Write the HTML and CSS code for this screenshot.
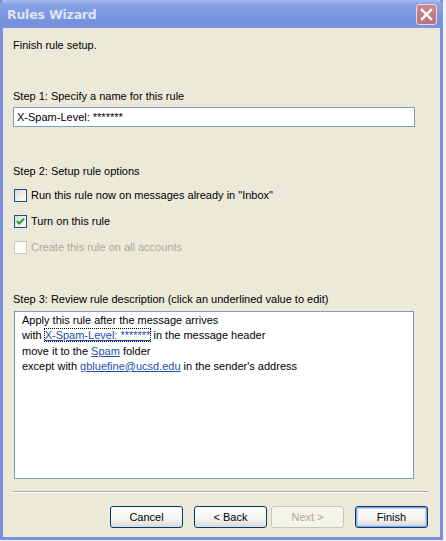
FILE: index.html
```html
<!DOCTYPE html>
<html>
<head>
<meta charset="utf-8">
<link rel="stylesheet" href="styles.css">
</head>
<body>
<div class="window">
  <div class="titlebar">
    <span class="title">Rules Wizard</span>
    <span class="close"><svg width="13" height="13" viewBox="0 0 13 13"><path d="M2 2 L11 11 M11 2 L2 11" stroke="#fff" stroke-width="2.4" stroke-linecap="square"/></svg></span>
  </div>
  <div class="content">
    <div class="intro">Finish rule setup.</div>
    <div class="label step1">Step 1: Specify a name for this rule</div>
    <div class="input">X-Spam-Level: *******</div>
    <div class="label step2">Step 2: Setup rule options</div>
    <div class="options">
      <div class="opt"><span class="cb"></span><span>Run this rule now on messages already in "Inbox"</span></div>
      <div class="opt"><span class="cb"><svg width="11" height="11" viewBox="0 0 11 11"><path d="M2 5 L4.3 7.5 L9 2.6" fill="none" stroke="#21a121" stroke-width="2"/></svg></span><span>Turn on this rule</span></div>
      <div class="opt disabled"><span class="cb"></span><span>Create this rule on all accounts</span></div>
    </div>
    <div class="label step3">Step 3: Review rule description (click an underlined value to edit)</div>
    <div class="desc">
      <div>Apply this rule after the message arrives</div>
      <div>with <a class="link focus">X-Spam-Level: *******</a> in the message header</div>
      <div>move it to the <a class="link">Spam</a> folder</div>
      <div>except with <a class="link">gbluefine@ucsd.edu</a> in the sender's address</div>
    </div>
    <div class="sep"></div>
    <div class="buttons">
      <span class="btn">Cancel</span>
      <span class="btn back">&lt; Back</span>
      <span class="btn off">Next &gt;</span>
      <span class="btn def">Finish</span>
    </div>
  </div>
</div>
</body>
</html>
```
FILE: styles.css
```css
html, body {
  margin: 0;
  padding: 0;
  background: #f4f4f4;
}
body {
  font-family: "Liberation Sans", "DejaVu Sans", sans-serif;
  font-size: 11px;
  color: #000;
}
.window {
  width: 437px;
  height: 537px;
  border-left: 3px solid #7b8edf;
  border-right: 3px solid #7b8edf;
  border-bottom: 3px solid #7b8edf;
  background: #ece9d8;
  display: flex;
  flex-direction: column;
}
.titlebar {
  height: 28px;
  margin: 0 -3px;
  padding: 0 6px 0 7px;
  background: linear-gradient(#a9bcee 0px, #8aa3e6 4px, #7d98e1 14px, #7590dc 24px, #7d93de 28px);
  display: flex;
  align-items: center;
  justify-content: space-between;
  border-radius: 6px 6px 0 0;
}
.title {
  color: #dde5f8;
  font-family: "DejaVu Sans", sans-serif;
  font-weight: bold;
  font-size: 12.5px;
  letter-spacing: -0.2px;
}
.close {
  width: 19px;
  height: 19px;
  border: 1px solid #e8d8dc;
  border-radius: 3px;
  background: linear-gradient(#cc8a90, #b9727a);
  display: flex;
  align-items: center;
  justify-content: center;
  margin-top: 1px;
}
.content {
  flex: 1;
  padding: 0 11px 0 10px;
  display: flex;
  flex-direction: column;
}
.intro {
  margin-top: 11px;
  line-height: 13px;
}
.label {
  line-height: 13px;
}
.step1 { margin-top: 38px; }
.input {
  margin-top: 4px;
  width: 397px;
  height: 18px;
  border: 1px solid #7f9db9;
  background: #fff;
  padding-left: 3px;
  line-height: 18px;
  box-sizing: content-box;
}
.step2 { margin-top: 38px; }
.options {
  margin-top: 10px;
  display: flex;
  flex-direction: column;
  gap: 12px;
}
.opt {
  display: flex;
  align-items: center;
  gap: 4px;
  height: 14px;
  padding-left: 1px;
}
.cb {
  width: 11px;
  height: 11px;
  border: 1px solid #1c5180;
  background: linear-gradient(135deg, #dcdcd6, #fff);
  display: flex;
  align-items: center;
  justify-content: center;
}
.disabled { color: #aca899; }
.disabled .cb {
  border-color: #cac8bb;
  background: #fff;
}
.step3 { margin-top: 39px; }
.desc {
  margin-top: 5px;
  height: 161px;
  width: 391px;
  margin-left: 1px;
  border: 1px solid #7f9db9;
  background: #fff;
  padding: 1px 0 4px 7px;
  line-height: 15.3px;
  box-sizing: content-box;
}
.link {
  color: #1d4fa8;
  text-decoration: underline;
}
.focus {
  outline: 1px dotted #000;
  outline-offset: 0;
}
.sep {
  margin-top: 12px;
  height: 0;
  width: 415px;
  border-top: 1px solid #aca899;
  border-bottom: 1px solid #fff;
}
.buttons {
  margin-top: 13px;
  display: flex;
  justify-content: flex-end;
  padding-right: 1px;
  gap: 11px;
}
.btn {
  width: 71px;
  height: 20px;
  border: 1px solid #003c74;
  border-radius: 3px;
  background: linear-gradient(#ffffff, #f3f3ef 60%, #dcdad0);
  display: flex;
  align-items: center;
  justify-content: center;
}
.back { margin-right: -7px; }
.off {
  color: #aca899;
  border-color: #c9c7ba;
  background: #f5f4ea;
}
.def {
  box-shadow: inset 0 0 0 1px #8aa5e0, inset 0 0 0 2px #bfd0f2;
}
```
